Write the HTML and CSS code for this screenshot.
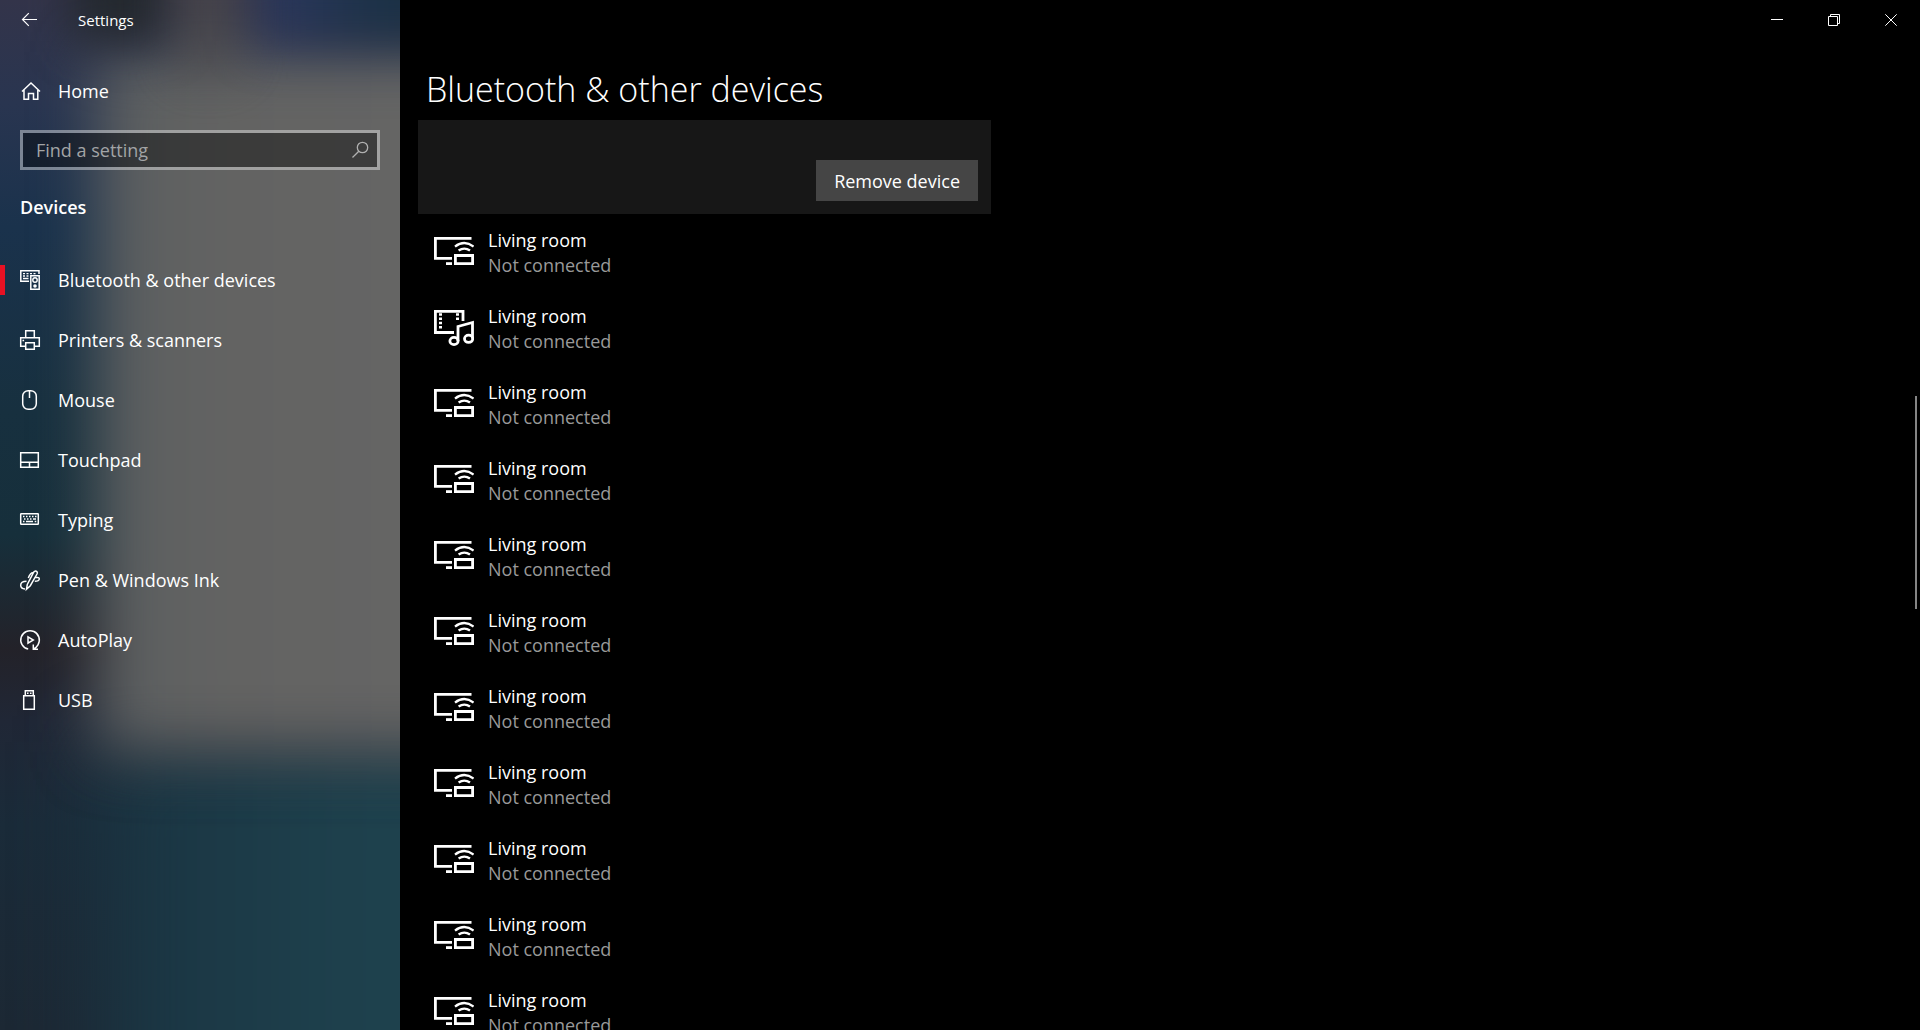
FILE: index.html
```html
<!DOCTYPE html>
<html lang="en">
  <head>
    <meta charset="UTF-8" />
    <meta name="viewport" content="width=device-width, initial-scale=1.0" />
    <title>Settings</title>
    <link rel="stylesheet" href="styles.css">
  </head>
  <body>
    <!-- Icons -->
    <svg class="sprite" aria-hidden="true">
      <symbol id="icon-cast" viewBox="0 0 40 40">
        <path d="M37.5 5.4H1.4V25.4H18" stroke-width="2.8" />
        <path d="M12 30.6H18" stroke-width="2.8" />
        <path d="M21.4 22.5H38.6V30.6H21.4Z" stroke-width="2.8" />
        <path d="M21 13.6Q30.3 6.6 39.6 13.6M24.6 17.6Q30.3 13.6 36 17.6" stroke-width="2.4" />
      </symbol>
      <symbol id="icon-media" viewBox="0 0 40 40">
        <path d="M20 23.5H1.4V2.4H29V12" stroke-width="2.8" />
        <path d="M5 5.5h3M5 9.7h3M5 14h3M5 18.2h3M22 5.5h3M22 9.7h3" stroke-width="2.4" />
        <path d="M24 32V17.5L38.5 13.5V29.5" stroke-width="2.8" />
        <ellipse cx="20" cy="32" rx="4.1" ry="3.6" stroke-width="2.8" />
        <ellipse cx="34.6" cy="29.8" rx="4.1" ry="3.6" stroke-width="2.8" />
      </symbol>
    </svg>

    <div class="settings">
      <aside class="sidebar">
        <div class="backdrop">
          <div class="glow glow-teal"></div>
          <div class="glow glow-panel"></div>
          <div class="glow glow-blue"></div>
          <div class="glow glow-dark"></div>
          <div class="glow glow-edge"></div>
        </div>

        <div class="title-bar">
          <button class="back-btn" aria-label="Back">
            <svg width="20" height="20" viewBox="0 0 20 20">
              <path d="M17 9.5H2.7M8.8 3.2L2.5 9.5L8.8 15.8" stroke-width="1.2" />
            </svg>
          </button>
          <span class="app-name">Settings</span>
        </div>

        <a class="nav-link home" href="#">
          <svg width="20" height="20" viewBox="0 0 20 20">
            <path d="M2 10.5L11 2L20 10.5M4 9V18.2H8.5V12.5H13.5V18.2H17.8V9" />
          </svg>
          Home
        </a>

        <div class="search">
          <input type="text" placeholder="Find a setting" aria-label="Find a setting" />
          <svg width="20" height="20" viewBox="0 0 20 20">
            <circle cx="12.5" cy="7.5" r="5.2" stroke-width="1.3" />
            <path d="M8.8 11.2L2.5 17.5" stroke-width="1.3" />
          </svg>
        </div>

        <h2>Devices</h2>

        <nav>
          <a class="nav-link active" href="#">
            <svg width="20" height="20" viewBox="0 0 20 20">
              <path d="M19 4V.8H.8V11.2H9" />
              <path d="M3 3.7h2M6.5 3.7h2M10 3.7h2M13.5 3.7h2M3 6h2M6.5 6h2M3 8.5h5.5" stroke-width="1.3" />
              <path d="M10.8 5.8H19.2V19.2H10.8Z" />
              <circle cx="15" cy="10" r="2.2" stroke-width="1.4" />
              <circle cx="15" cy="16" r="1.8" fill="currentColor" stroke="none" />
            </svg>
            Bluetooth &amp; other devices
          </a>
          <a class="nav-link" href="#">
            <svg width="20" height="20" viewBox="0 0 20 20">
              <path d="M5.7 7V.7H14.3V7M5 16.3H.7V7.7H19.3V16.3H15M5.7 12.7H14.3V19.3H5.7ZM2.5 10.5h1.6" />
            </svg>
            Printers &amp; scanners
          </a>
          <a class="nav-link" href="#">
            <svg width="20" height="20" viewBox="0 0 20 20">
              <rect x="2.7" y=".7" width="13.6" height="18.6" rx="5.5" />
              <path d="M9.5 1V8" />
            </svg>
            Mouse
          </a>
          <a class="nav-link" href="#">
            <svg width="20" height="20" viewBox="0 0 20 20">
              <path d="M.7 2.7H18.3V17.3H.7ZM.7 12.3H18.3M9.5 12.3V17" />
            </svg>
            Touchpad
          </a>
          <a class="nav-link" href="#">
            <svg width="20" height="20" viewBox="0 0 20 20">
              <rect x=".7" y="3.7" width="17.6" height="10.6" rx=".5" />
              <path d="M3 6.4h1.5M6 6.4h1.5M9 6.4h1.5M12 6.4h1.5M15 6.4h1.5M4 9h1.5M7 9h1.5M10 9h1.5M13 9h3M3 11.6h1.5M6 11.6h7M14.7 11.6h1.6" />
            </svg>
            Typing
          </a>
          <a class="nav-link" href="#">
            <svg width="20" height="20" viewBox="0 0 20 20">
              <path d="M6.5 19.2L7.3 14.5L13.8 2Q15.5 0 17 1.7Q17.7 2.7 17 4L10.3 15.7ZM13 2.8Q10.3 2.7 8.3 8M6.5 11.3Q.7 11.3 .7 15.3Q.7 18.7 5 19M15.5 7.5Q19.5 7 19.3 9Q19 11.2 14.8 11.3" />
            </svg>
            Pen &amp; Windows Ink
          </a>
          <a class="nav-link" href="#">
            <svg width="20" height="20" viewBox="0 0 20 20">
              <path d="M8.2 19.1A9.3 9.3 0 1 1 18 14.8Q16.7 17.3 13.5 19M13.3 14.5V19.2H18" />
              <path d="M8 6.8L13.3 10L8 13.2Z" />
            </svg>
            AutoPlay
          </a>
          <a class="nav-link" href="#">
            <svg width="20" height="20" viewBox="0 0 20 20">
              <path d="M3.7 5.7H14.3V19.3H3.7ZM5.3 5.5V.7H13.3V5.5M7 3.3h1.5M10 3.3h1.5" />
            </svg>
            USB
          </a>
        </nav>
      </aside>

      <main class="content">
        <div class="window-controls">
          <button aria-label="Minimize">
            <svg width="12" height="12" viewBox="0 0 12 12">
              <path d="M0 5.5H12" stroke-width="1" />
            </svg>
          </button>
          <button aria-label="Restore">
            <svg width="12" height="12" viewBox="0 0 12 12">
              <path d="M.5 2.5H9.5V11.5H.5ZM2.5 2.5V.5H11.5V9.5H9.5" stroke-width="1" />
            </svg>
          </button>
          <button aria-label="Close">
            <svg width="12" height="12" viewBox="0 0 12 12">
              <path d="M.3 .3L11.7 11.7M11.7 .3L.3 11.7" stroke-width="1" />
            </svg>
          </button>
        </div>

        <h1>Bluetooth &amp; other devices</h1>

        <div class="selected-device">
          <button class="remove-btn">Remove device</button>
        </div>

        <ul class="devices">
          <li>
            <svg width="40" height="40"><use href="#icon-cast" /></svg>
            <div><p>Living room</p><p class="status">Not connected</p></div>
          </li>
          <li>
            <svg width="40" height="40"><use href="#icon-media" /></svg>
            <div><p>Living room</p><p class="status">Not connected</p></div>
          </li>
          <li>
            <svg width="40" height="40"><use href="#icon-cast" /></svg>
            <div><p>Living room</p><p class="status">Not connected</p></div>
          </li>
          <li>
            <svg width="40" height="40"><use href="#icon-cast" /></svg>
            <div><p>Living room</p><p class="status">Not connected</p></div>
          </li>
          <li>
            <svg width="40" height="40"><use href="#icon-cast" /></svg>
            <div><p>Living room</p><p class="status">Not connected</p></div>
          </li>
          <li>
            <svg width="40" height="40"><use href="#icon-cast" /></svg>
            <div><p>Living room</p><p class="status">Not connected</p></div>
          </li>
          <li>
            <svg width="40" height="40"><use href="#icon-cast" /></svg>
            <div><p>Living room</p><p class="status">Not connected</p></div>
          </li>
          <li>
            <svg width="40" height="40"><use href="#icon-cast" /></svg>
            <div><p>Living room</p><p class="status">Not connected</p></div>
          </li>
          <li>
            <svg width="40" height="40"><use href="#icon-cast" /></svg>
            <div><p>Living room</p><p class="status">Not connected</p></div>
          </li>
          <li>
            <svg width="40" height="40"><use href="#icon-cast" /></svg>
            <div><p>Living room</p><p class="status">Not connected</p></div>
          </li>
          <li>
            <svg width="40" height="40"><use href="#icon-cast" /></svg>
            <div><p>Living room</p><p class="status">Not connected</p></div>
          </li>
        </ul>

        <div class="scroll-thumb"></div>
      </main>
    </div>
  </body>
</html>
```

FILE: styles.css
```css
* {
  margin: 0;
  padding: 0;
  box-sizing: border-box;
  font-family: "Segoe UI", "Open Sans", "Noto Sans", sans-serif;
}

body {
  background: #000;
  color: #fff;
  font-size: 18px;
  line-height: 25px;
}

svg {
  flex: none;
  fill: none;
  stroke: currentColor;
  stroke-width: 1.5;
}

button {
  border: none;
  background: transparent;
  color: inherit;
  font-size: inherit;
}

.sprite {
  display: none;
}

.settings {
  display: flex;
  height: 100vh;
  overflow: hidden;
}

/* Sidebar */
.sidebar {
  position: relative;
  flex: none;
  width: 400px;
}

.backdrop {
  position: absolute;
  inset: 0;
  z-index: -1;
  overflow: hidden;
  background: linear-gradient(#33344a, #293550 10%, #1a324c 22%, #17303f 40%, #162f3b 52%, #232229 63%, #202736 70%, #1a2b39 80%, #1c2834);
}

.glow {
  position: absolute;
}

.glow-teal {
  top: 72%;
  left: 25%;
  right: -30%;
  bottom: -15%;
  background: linear-gradient(90deg, #1a3341, #1e414d 60%);
  filter: blur(40px);
}

.glow-panel {
  top: 5%;
  left: 24%;
  right: -30%;
  bottom: 27%;
  background: linear-gradient(90deg, #5a5e60, #636362 30%, #666);
  filter: blur(30px);
}

.glow-blue {
  top: -8%;
  left: 64%;
  right: -20%;
  height: 12%;
  background: linear-gradient(90deg, #2d3860, #1a3145 60%);
  filter: blur(24px);
}

.glow-dark {
  top: -6%;
  left: 18%;
  width: 24%;
  height: 10%;
  background: #24292f;
  filter: blur(22px);
}

.glow-edge {
  top: -5%;
  left: 44%;
  width: 16%;
  height: 12%;
  background: #55504b;
  opacity: 0.6;
  filter: blur(24px);
}

.title-bar {
  display: flex;
  align-items: center;
  height: 40px;
  padding-left: 20px;
}

.back-btn {
  display: flex;
  width: 58px;
}

.app-name {
  font-size: 15px;
}

.home {
  margin-top: 21px;
}

.nav-link {
  display: flex;
  align-items: center;
  gap: 18px;
  height: 60px;
  padding-left: 20px;
  color: #fff;
  text-decoration: none;
}

.nav-link svg {
  overflow: visible;
}

.active {
  background: linear-gradient(#e81123, #e81123) left center / 5px 30px no-repeat;
}

.search {
  display: flex;
  align-items: center;
  height: 40px;
  margin: 9px 20px 0;
  padding-right: 7px;
  border: 3px solid rgba(255, 255, 255, 0.4);
  background: rgba(0, 0, 0, 0.4);
  background-clip: padding-box;
  color: #b0b0b0;
}

.search input {
  flex: 1;
  min-width: 0;
  padding-left: 13px;
  border: none;
  outline: none;
  background: transparent;
  color: #fff;
  font-size: 18px;
}

.search input::placeholder {
  color: #a2a4a6;
}

h2 {
  margin: 25px 20px 30px;
  font-size: 18px;
  font-weight: 600;
}

/* Content */
.content {
  position: relative;
  flex: 1;
  padding-left: 18px;
}

.window-controls {
  display: flex;
  justify-content: flex-end;
  height: 40px;
  padding-right: 1px;
}

.window-controls button {
  display: flex;
  justify-content: center;
  align-items: center;
  width: 57px;
}

h1 {
  height: 80px;
  padding: 26px 0 0 8px;
  font-size: 34px;
  font-weight: 300;
  line-height: 46px;
}

.selected-device {
  display: flex;
  justify-content: flex-end;
  align-items: flex-end;
  max-width: 573px;
  height: 94px;
  padding: 13px;
  background: #171717;
}

.remove-btn {
  height: 41px;
  padding: 0 18px;
  background: #454545;
}

.devices {
  list-style: none;
}

.devices li {
  display: flex;
  align-items: center;
  gap: 14px;
  padding: 14px 16px 12px;
}

.status {
  color: #999;
}

.scroll-thumb {
  position: absolute;
  top: 396px;
  right: 3px;
  width: 2px;
  height: 213px;
  background: #858585;
}
```
